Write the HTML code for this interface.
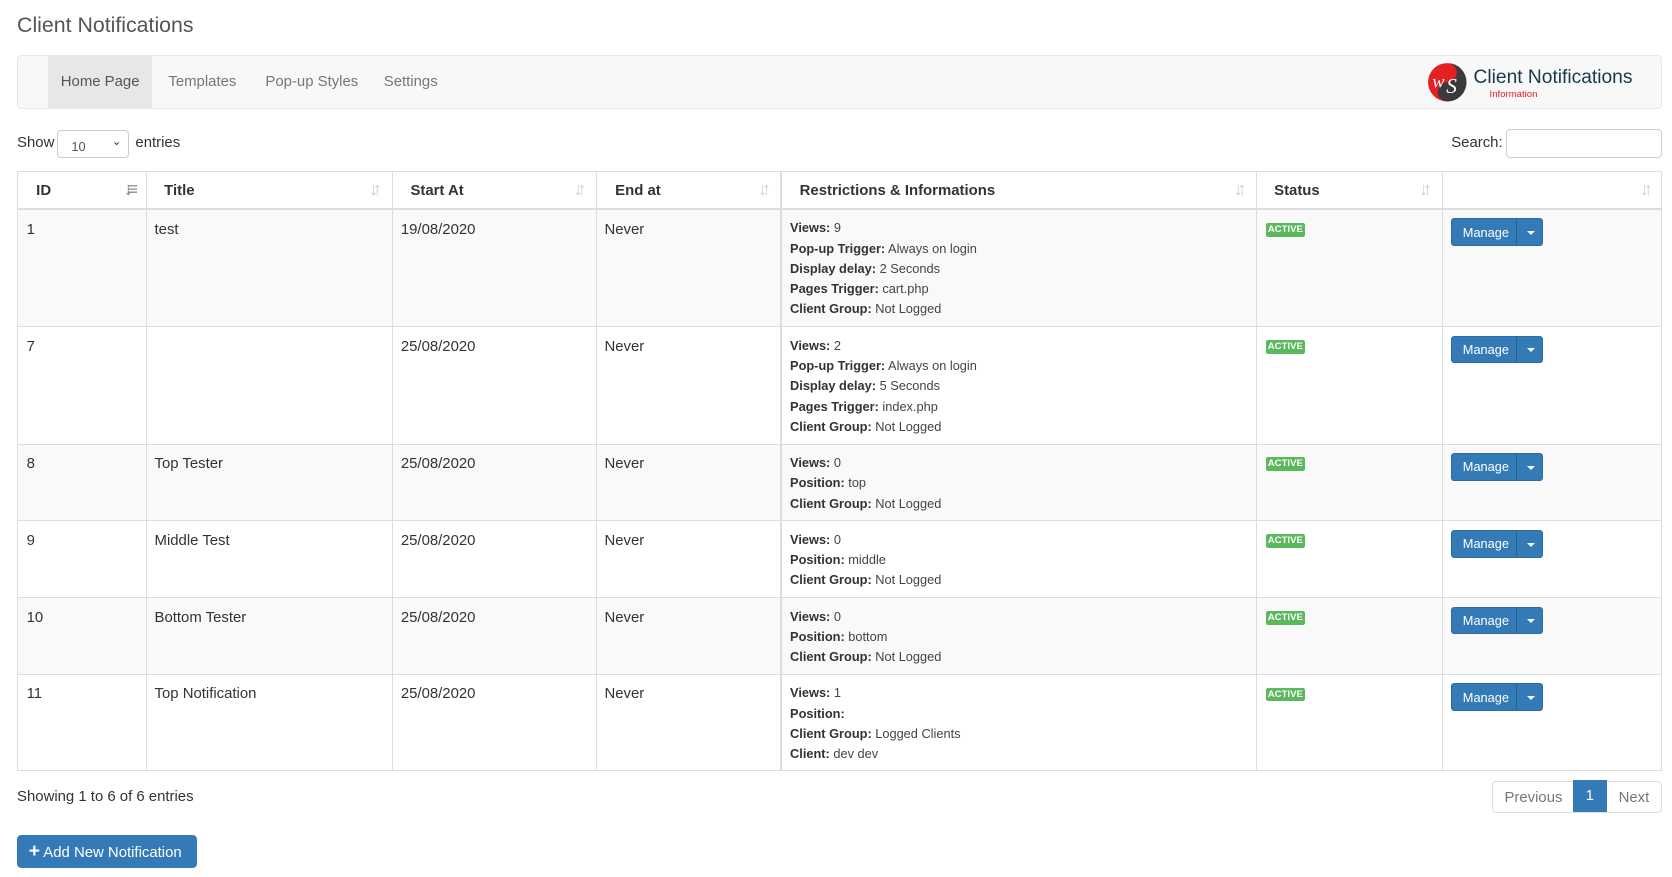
<!DOCTYPE html>
<html><head><meta charset="utf-8"><style>
html,body{margin:0;padding:0;background:#fff;}
body{width:1672px;height:877px;overflow:hidden;font-family:"Liberation Sans",sans-serif;color:#333;}
#w{zoom:1.0663;position:relative;width:1568px;height:822px;}
.a{position:absolute;}
h1{position:absolute;left:16px;top:12px;margin:0;font-weight:normal;font-size:20px;color:#555;}
.nav{left:16px;top:52px;width:1541px;height:48px;background:#f8f8f8;border:1px solid #e7e7e7;border-radius:4px;}
.tab{position:absolute;top:0;height:48px;line-height:49px;font-size:14px;color:#777;}
.tbl{left:16px;top:160px;width:1543px;height:563px;border:1px solid #ddd;box-sizing:border-box;}
.hd{font-weight:bold;font-size:14px;color:#333;}
.vl{position:absolute;top:0;width:1px;background:#ddd;height:562px;}
.row{position:absolute;left:0;width:1541px;border-top:1px solid #ddd;}
.row.s{background:#f9f9f9;}
.c{position:absolute;top:10px;font-size:14px;color:#333;}
.info{position:absolute;left:724px;top:8px;font-size:12px;line-height:19px;color:#444;}
.info b{font-weight:bold;color:#333;}
.lbl{position:absolute;left:1170px;top:12px;background:#5cb85c;color:#fff;font-size:9px;font-weight:bold;padding:1px 2px;border-radius:2px;line-height:11px;}
.btn{position:absolute;left:1344px;top:8px;width:86px;height:26px;background:#337ab7;border:1px solid #2e6da4;border-radius:3px;box-sizing:border-box;color:#fff;font-size:12px;}
.btn span{position:absolute;left:10px;top:5px;}
.btn i{position:absolute;left:60px;top:0;width:1px;height:24px;background:#286090;}
.btn em{position:absolute;left:70px;top:11px;border-left:4px solid transparent;border-right:4px solid transparent;border-top:4px solid #fff;}
.sort{position:absolute;top:7px;color:#ccc;font-size:17px;font-weight:bold;letter-spacing:-5px;}
</style></head><body><div id="w">
<h1>Client Notifications</h1>
<div class="a nav">
 <div class="tab" style="left:28px;width:98px;background:#e7e7e7;color:#555;text-align:center;">Home Page</div>
 <div class="tab" style="left:141px">Templates</div>
 <div class="tab" style="left:232px">Pop-up Styles</div>
 <div class="tab" style="left:343px">Settings</div>
 <svg class="a" style="left:1321px;top:5px" width="38" height="38" viewBox="0 0 38 38"><circle cx="19" cy="19" r="18" fill="#e32124"/><path d="M19 1a18 18 0 0 1 0 36a9 9 0 0 1 0-18a9 9 0 0 0 0-18z" fill="#3a3a3a"/><text x="5" y="24" font-family="Liberation Serif" font-style="italic" font-size="17" fill="#fff">w</text><text x="18" y="29" font-family="Liberation Serif" font-style="italic" font-size="20" fill="#fff">S</text></svg>
 <div class="a" style="left:1365px;top:10px;font-size:18px;color:#17394a;">Client Notifications</div>
 <div class="a" style="left:1380px;top:31px;font-size:9px;color:#e32124;">Information</div>
</div>
<div class="a" style="left:16px;top:126px;font-size:14px;">Show</div>
<div class="a" style="left:53px;top:122px;width:68px;height:26px;border:1px solid #ccc;border-radius:4px;box-sizing:border-box;font-size:12px;padding:7px 0 0 13px;color:#555;">10<span style="position:absolute;right:6px;top:3px;font-size:11px;color:#333">&#8964;</span></div>
<div class="a" style="left:127px;top:126px;font-size:14px;">entries</div>
<div class="a" style="left:1361px;top:126px;font-size:14px;">Search:</div>
<div class="a" style="left:1412px;top:121px;width:147px;height:27px;border:1px solid #ccc;border-radius:4px;box-sizing:border-box;"></div>

<div class="a tbl">
 <div class="a" style="left:0;top:34px;width:1541px;height:2px;background:#ddd"></div>
 <div class="a hd" style="left:17px;top:10px">ID</div><div class="sort" style="left:99px;color:#888">↓≡</div>
 <div class="a hd" style="left:137px;top:10px">Title</div><div class="sort" style="left:329px">↓↑</div>
 <div class="a hd" style="left:368px;top:10px">Start At</div><div class="sort" style="left:521px">↓↑</div>
 <div class="a hd" style="left:560px;top:10px">End at</div><div class="sort" style="left:694px">↓↑</div>
 <div class="a hd" style="left:733px;top:10px">Restrictions &amp; Informations</div><div class="sort" style="left:1140px">↓↑</div>
 <div class="a hd" style="left:1178px;top:10px">Status</div><div class="sort" style="left:1314px">↓↑</div>
 <div class="sort" style="left:1521px">↓↑</div>

 <div class="row s" style="top:35px;height:110px"><div class="c" style="left:8px">1</div><div class="c" style="left:128px">test</div><div class="c" style="left:359px">19/08/2020</div><div class="c" style="left:550px">Never</div>
  <div class="info"><b>Views:</b> 9<br><b>Pop-up Trigger:</b> Always on login<br><b>Display delay:</b> 2 Seconds<br><b>Pages Trigger:</b> cart.php<br><b>Client Group:</b> Not Logged</div><div class="lbl">ACTIVE</div><div class="btn"><span>Manage</span><i></i><em></em></div></div>
 <div class="row" style="top:145px;height:110px"><div class="c" style="left:8px">7</div><div class="c" style="left:359px">25/08/2020</div><div class="c" style="left:550px">Never</div>
  <div class="info"><b>Views:</b> 2<br><b>Pop-up Trigger:</b> Always on login<br><b>Display delay:</b> 5 Seconds<br><b>Pages Trigger:</b> index.php<br><b>Client Group:</b> Not Logged</div><div class="lbl">ACTIVE</div><div class="btn"><span>Manage</span><i></i><em></em></div></div>
 <div class="row s" style="top:255px;height:72px"><div class="c" style="left:8px">8</div><div class="c" style="left:128px">Top Tester</div><div class="c" style="left:359px">25/08/2020</div><div class="c" style="left:550px">Never</div>
  <div class="info"><b>Views:</b> 0<br><b>Position:</b> top<br><b>Client Group:</b> Not Logged</div><div class="lbl">ACTIVE</div><div class="btn"><span>Manage</span><i></i><em></em></div></div>
 <div class="row" style="top:327px;height:72px"><div class="c" style="left:8px">9</div><div class="c" style="left:128px">Middle Test</div><div class="c" style="left:359px">25/08/2020</div><div class="c" style="left:550px">Never</div>
  <div class="info"><b>Views:</b> 0<br><b>Position:</b> middle<br><b>Client Group:</b> Not Logged</div><div class="lbl">ACTIVE</div><div class="btn"><span>Manage</span><i></i><em></em></div></div>
 <div class="row s" style="top:399px;height:72px"><div class="c" style="left:8px">10</div><div class="c" style="left:128px">Bottom Tester</div><div class="c" style="left:359px">25/08/2020</div><div class="c" style="left:550px">Never</div>
  <div class="info"><b>Views:</b> 0<br><b>Position:</b> bottom<br><b>Client Group:</b> Not Logged</div><div class="lbl">ACTIVE</div><div class="btn"><span>Manage</span><i></i><em></em></div></div>
 <div class="row" style="top:471px;height:91px"><div class="c" style="left:8px">11</div><div class="c" style="left:128px">Top Notification</div><div class="c" style="left:359px">25/08/2020</div><div class="c" style="left:550px">Never</div>
  <div class="info"><b>Views:</b> 1<br><b>Position:</b><br><b>Client Group:</b> Logged Clients<br><b>Client:</b> dev dev</div><div class="lbl">ACTIVE</div><div class="btn"><span>Manage</span><i></i><em></em></div></div>

 <div class="vl" style="left:120px"></div><div class="vl" style="left:351px"></div><div class="vl" style="left:542px"></div><div class="vl" style="left:715px"></div><div class="vl" style="left:1161px"></div><div class="vl" style="left:1335px"></div>
</div>

<div class="a" style="left:16px;top:739px;font-size:14px;">Showing 1 to 6 of 6 entries</div>
<div class="a" style="left:1399px;top:732px;width:160px;height:30px;border:1px solid #ddd;border-radius:4px;box-sizing:border-box;font-size:14px;color:#777;">
 <span class="a" style="left:11px;top:7px">Previous</span>
 <span class="a" style="left:75px;top:-1px;width:32px;height:30px;background:#337ab7;color:#fff;text-align:center;line-height:30px">1</span>
 <span class="a" style="left:118px;top:7px">Next</span>
</div>
<div class="a" style="left:16px;top:783px;width:169px;height:31px;background:#337ab7;border-radius:4px;color:#fff;font-size:14px;line-height:31px;"><span style="font-weight:bold;font-size:18px;margin-left:11px;">+</span> Add New Notification</div>
</div></body></html>
